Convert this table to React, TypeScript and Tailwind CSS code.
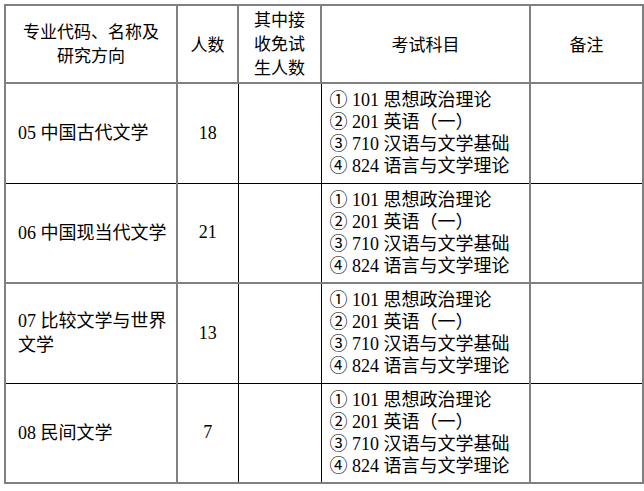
import React from 'react';

const subjects = ['① 101 思想政治理论', '② 201 英语（一）', '③ 710 汉语与文学基础', '④ 824 语言与文学理论'];

const rows = [
  { name: '05 中国古代文学', count: '18' },
  { name: '06 中国现当代文学', count: '21' },
  { name: '07 比较文学与世界文学', count: '13' },
  { name: '08 民间文学', count: '7' },
];

const sans = { fontFamily: '"Noto Sans CJK SC", "Liberation Sans", sans-serif' };
const serif = { fontFamily: '"Liberation Serif", "Noto Sans CJK SC", serif' };

export default function App() {
  return (
    <div className="w-[644px] h-[491px] bg-white pt-[4px] pl-[4px]">
      <table className="table-fixed border-collapse text-black">
        <colgroup>
          <col className="w-[172px]" />
          <col className="w-[61px]" />
          <col className="w-[83px]" />
          <col className="w-[209px]" />
          <col className="w-[113px]" />
        </colgroup>
        <thead>
          <tr className="h-[78px] border-2 border-[#808080] text-[17px]" style={sans}>
            <th className="border-2 border-[#808080] font-normal leading-[24px] px-2 pb-[2px]">专业代码、名称及<br />研究方向</th>
            <th className="border-2 border-[#808080] font-normal leading-[24px]">人数</th>
            <th className="border border-black font-normal leading-[24px] pb-[3px]">其中接<br />收免试<br />生人数</th>
            <th className="border-2 border-[#808080] font-normal leading-[24px]">考试科目</th>
            <th className="border-2 border-[#808080] font-normal leading-[24px]">备注</th>
          </tr>
        </thead>
        <tbody style={serif} className="text-[18px]">
          {rows.map((r, i) => (
            <tr key={r.name} className={i % 2 === 0 ? 'h-[100px] border-b border-black' : 'h-[100px] border-b-2 border-[#808080]'}>
              <td className="border-l-2 border-r-2 border-[#808080] pl-[12px] pr-1 leading-[24px]">{r.name}</td>
              <td className="border-r border-black text-center">{r.count}</td>
              <td className="border-r border-black"></td>
              <td className="border-r-2 border-[#808080] pl-[8px] leading-[22px] whitespace-nowrap">
                {subjects.map((s) => (
                  <div key={s}>{s}</div>
                ))}
              </td>
              <td className="border-r-2 border-[#808080]"></td>
            </tr>
          ))}
        </tbody>
      </table>
    </div>
  );
}
